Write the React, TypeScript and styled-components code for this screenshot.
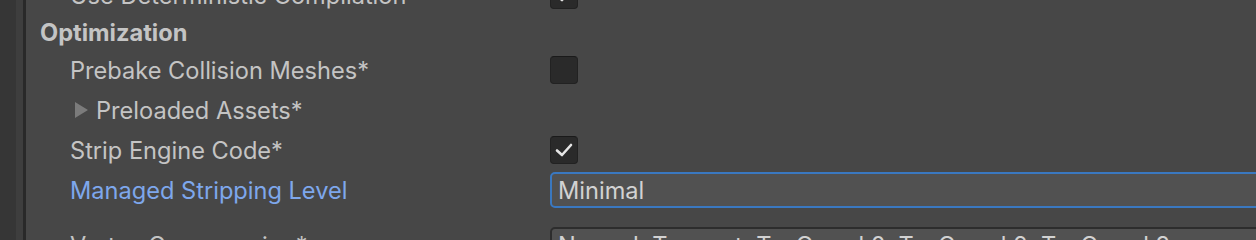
import React from 'react';
import styled, { createGlobalStyle } from 'styled-components';

const GlobalStyle = createGlobalStyle`
  html, body {
    margin: 0;
    padding: 0;
    background: #474747;
    overflow: hidden;
  }
  body {
    font-family: Inter, 'Liberation Sans', sans-serif;
  }
`;

const Page = styled.div`
  display: flex;
  width: 1256px;
  height: 240px;
  overflow: hidden;
  background: #474747;
`;

const Gutter = styled.div`
  width: 16px;
  background: #363636;
  flex-shrink: 0;
`;

const GutterInner = styled.div`
  width: 7px;
  background: #3e3e3e;
  border-right: 3px solid #292929;
  flex-shrink: 0;
`;

const Content = styled.div`
  flex: 1;
  display: flex;
  flex-direction: column;
  margin-top: -25px;
  padding-left: 14px;
  min-width: 0;
`;

const Row = styled.div<{ $indent?: number }>`
  display: flex;
  align-items: center;
  height: 40px;
  padding-left: ${(p) => p.$indent ?? 30}px;
  flex-shrink: 0;
`;

const Header = styled.div`
  font-size: 23.6px;
  font-weight: 700;
  color: #c4c4c4;
  height: 35px;
  display: flex;
  align-items: center;
  flex-shrink: 0;
`;

const Label = styled.div<{ $active?: boolean }>`
  width: 480px;
  flex-shrink: 0;
  font-size: 23.6px;
  color: ${(p) => (p.$active ? '#7ea7ec' : '#c4c4c4')};
  white-space: nowrap;
  display: flex;
  align-items: center;
`;

const Foldout = styled.span`
  width: 0;
  height: 0;
  border-top: 8px solid transparent;
  border-bottom: 8px solid transparent;
  border-left: 13px solid #7b7b7b;
  margin-left: 5px;
  margin-right: 8px;
`;

const Checkbox = styled.div`
  width: 28px;
  height: 28px;
  box-sizing: border-box;
  border-radius: 4px;
  background: #2a2a2a;
  border: 1px solid #222;
  border-top-color: #1a1a1a;
  display: flex;
  align-items: center;
  justify-content: center;
`;

const Field = styled.div<{ $focused?: boolean }>`
  flex: 1;
  height: 36px;
  box-sizing: border-box;
  margin-right: -20px;
  border-radius: 5px;
  background: #515151;
  border: 2px solid ${(p) => (p.$focused ? '#3a78c0' : '#2d2d2d')};
  display: flex;
  align-items: center;
  padding-left: 6px;
  font-size: 23.6px;
  color: #d2d2d2;
  white-space: nowrap;
  overflow: hidden;
`;

const Spacer = styled.div`
  height: 15px;
  flex-shrink: 0;
`;

const Check = () => (
  <svg width="20" height="20" viewBox="0 0 20 20">
    <polyline points="3,10.5 8,15 17,5" fill="none" stroke="#e6e6e6" strokeWidth="2.6" strokeLinecap="round" strokeLinejoin="round" />
  </svg>
);

export default function App() {
  return (
    <>
      <GlobalStyle />
      <Page>
        <Gutter />
        <GutterInner />
        <Content>
          <Row>
            <Label>Use Deterministic Compilation</Label>
            <Checkbox><Check /></Checkbox>
          </Row>
          <Header>Optimization</Header>
          <Row>
            <Label>Prebake Collision Meshes*</Label>
            <Checkbox />
          </Row>
          <Row>
            <Label><Foldout />Preloaded Assets*</Label>
          </Row>
          <Row>
            <Label>Strip Engine Code*</Label>
            <Checkbox><Check /></Checkbox>
          </Row>
          <Row>
            <Label $active>Managed Stripping Level</Label>
            <Field $focused>Minimal</Field>
          </Row>
          <Spacer />
          <Row>
            <Label>Vertex Compression*</Label>
            <Field>Normal, Tangent, TexCoord 0, TexCoord 2, TexCoord 3</Field>
          </Row>
        </Content>
      </Page>
    </>
  );
}
